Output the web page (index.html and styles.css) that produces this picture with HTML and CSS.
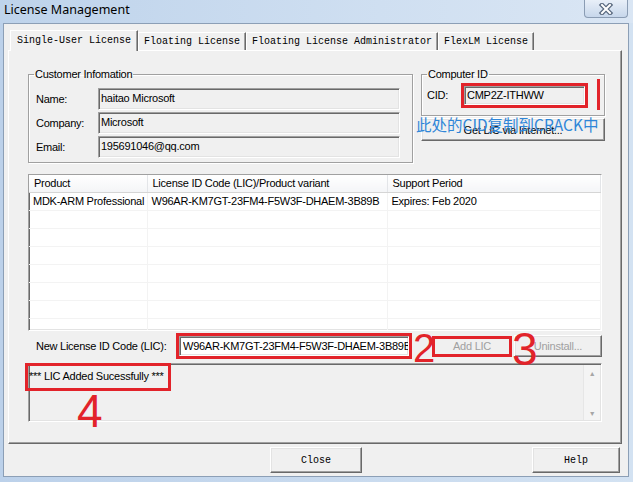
FILE: index.html
```html
<!DOCTYPE html>
<html lang="en">

<head>
  <meta charset="UTF-8">
  <title>License Management</title>
  <link rel="stylesheet" href="styles.css">
</head>

<body>

  <div class="window">
    <div class="titlebar">
      <span class="title">License Management</span>
      <button type="button" class="close-x" aria-label="Close">
        <svg width="16" height="12" viewBox="0 0 16 12">
          <path d="M4 2 L12 10 M12 2 L4 10" stroke="#56667c" stroke-width="4.5" stroke-linecap="square" fill="none" />
          <path d="M4 2 L12 10 M12 2 L4 10" stroke="#ffffff" stroke-width="2" stroke-linecap="square" fill="none" />
        </svg>
      </button>
    </div>

    <div class="client">
      <div class="tabs">
        <div class="tab active">Single-User License</div>
        <div class="tab">Floating License</div>
        <div class="tab">Floating License Administrator</div>
        <div class="tab">FlexLM License</div>
      </div>

      <div class="panel">
        <div class="top-row">
          <fieldset class="group customer">
            <legend>Customer Infomation</legend>
            <div class="field-row">
              <label>Name:</label>
              <div class="field sunken">haitao Microsoft</div>
            </div>
            <div class="field-row">
              <label>Company:</label>
              <div class="field sunken">Microsoft</div>
            </div>
            <div class="field-row">
              <label>Email:</label>
              <div class="field sunken">195691046@qq.com</div>
            </div>
          </fieldset>

          <div class="computer">
            <fieldset class="group cid-group">
              <legend>Computer ID</legend>
              <div class="field-row">
                <label class="cid-label">CID:</label>
                <div class="field cid sunken marked">CMP2Z-ITHWW</div>
              </div>
            </fieldset>
            <button type="button" class="btn get-lic">Get LIC via Internet...</button>
          </div>
        </div>

        <div class="list sunken">
          <table>
            <colgroup>
              <col class="c1">
              <col class="c2">
              <col class="c3">
            </colgroup>
            <thead>
              <tr>
                <th>Product</th>
                <th>License ID Code (LIC)/Product variant</th>
                <th>Support Period</th>
              </tr>
            </thead>
            <tbody>
              <tr>
                <td>MDK-ARM Professional</td>
                <td>W96AR-KM7GT-23FM4-F5W3F-DHAEM-3B89B</td>
                <td>Expires: Feb 2020</td>
              </tr>
              <tr><td></td><td></td><td></td></tr>
              <tr><td></td><td></td><td></td></tr>
              <tr><td></td><td></td><td></td></tr>
              <tr><td></td><td></td><td></td></tr>
              <tr><td></td><td></td><td></td></tr>
              <tr><td></td><td></td><td></td></tr>
              <tr><td></td><td></td><td></td></tr>
            </tbody>
          </table>
        </div>

        <div class="lic-row">
          <label class="lic-label">New License ID Code (LIC):</label>
          <input type="text" class="lic-input sunken marked" value="W96AR-KM7GT-23FM4-F5W3F-DHAEM-3B89B" readonly>
          <button type="button" class="btn add-lic" disabled>Add LIC</button>
          <button type="button" class="btn uninstall" disabled>Uninstall...</button>
        </div>

        <div class="output sunken">
          <div class="msg-area">
            <span class="msg">*** LIC Added Sucessfully ***</span>
          </div>
          <div class="scrollbar">
            <span>&#9650;</span>
            <span>&#9660;</span>
          </div>
        </div>

        <span class="note">此处的CID复制到CRACK中</span>
        <span class="bar"></span>
        <span class="digit d2">2</span>
        <span class="digit d3">3</span>
        <span class="digit d4">4</span>
      </div>

      <div class="footer">
        <button type="button" class="btn mono close-btn">Close</button>
        <button type="button" class="btn mono help-btn">Help</button>
      </div>
    </div>
  </div>

</body>

</html>
```

FILE: styles.css
```css
* {
  box-sizing: border-box;
}

body {
  margin: 0;
  width: 633px;
  height: 482px;
  overflow: hidden;
  font-family: 'Liberation Sans', Arial, sans-serif;
  font-size: 11px;
  letter-spacing: -0.25px;
  color: #000;
  background: linear-gradient(to right, #bcd1ea, #d3e2f2);
}

.window {
  height: 482px;
  display: flex;
  flex-direction: column;
}

/* title bar */
.titlebar {
  height: 23px;
  display: flex;
  justify-content: space-between;
  align-items: flex-start;
  background: linear-gradient(to right, #bed3eb, #cfdff1 60%, #dae6f4);
}

.title {
  margin-left: 4px;
  font-family: 'Noto Sans', sans-serif;
  font-size: 12.5px;
  letter-spacing: 0;
  line-height: 19px;
}

.close-x {
  width: 44px;
  height: 18px;
  margin-right: 5px;
  padding: 0;
  border: 1px solid #8a9cb3;
  border-top: none;
  border-radius: 0 0 4px 4px;
  background: linear-gradient(#e8eff8, #c7d7eb);
  display: flex;
  align-items: center;
  justify-content: center;
}

/* dialog body */
.client {
  flex: 1;
  margin: 0 4px 5px 3px;
  padding: 6px 6px 0 4px;
  background: #f0f0f0;
  border: 1px solid #8c9fb6;
  display: flex;
  flex-direction: column;
}

.tabs {
  display: flex;
  align-items: flex-end;
  height: 20px;
  margin-left: 2px;
  font-family: 'Liberation Mono', 'Courier New', monospace;
  font-size: 10px;
  letter-spacing: 0;
}

.tab {
  height: 18px;
  line-height: 17px;
  padding: 0 5px;
  white-space: nowrap;
  border-top: 1px solid #fff;
  border-left: 1px solid #fff;
  border-right: 1px solid #696969;
  box-shadow: inset -1px 0 0 #a0a0a0;
}

.tab.active {
  position: relative;
  z-index: 1;
  height: 21px;
  line-height: 20px;
  margin-bottom: -1px;
  padding: 0 6px;
  background: #f0f0f0;
}

.panel {
  position: relative;
  height: 394px;
  padding: 17px 0 0 19px;
  border: 1px solid;
  border-color: #fff #696969 #696969 #fff;
  box-shadow: inset -1px -1px 0 #a0a0a0;
}

.sunken {
  border: 1px solid;
  border-color: #a0a0a0 #fff #fff #a0a0a0;
  box-shadow: inset 1px 1px 0 #696969, inset -1px -1px 0 #e3e3e3;
}

.btn {
  padding: 0;
  font-family: inherit;
  font-size: 11px;
  letter-spacing: inherit;
  color: #000;
  background: #f0f0f0;
  border: 1px solid;
  border-color: #fff #696969 #696969 #fff;
  box-shadow: inset -1px -1px 0 #a0a0a0, inset 1px 1px 0 #e3e3e3;
}

.btn:disabled {
  color: #a0a0a0;
}

.marked {
  outline: 3px solid #e2232a;
}

/* group boxes */
.top-row {
  display: flex;
  gap: 8px;
}

.group {
  margin: 0;
  border: 1px solid #a0a0a0;
  box-shadow: 1px 1px 0 #fff, inset 1px 1px 0 #fff;
}

.group legend {
  margin-left: -2px;
  padding: 0 1px;
  line-height: 13px;
}

.customer {
  width: 385px;
  height: 95px;
  padding: 7px 11px 0 7px;
}

.field-row {
  display: flex;
  align-items: center;
  height: 22px;
  margin-bottom: 2px;
}

.field-row label {
  width: 62px;
}

.field {
  width: 302px;
  height: 22px;
  padding-left: 2px;
  line-height: 18px;
  background: #f0f0f0;
  white-space: nowrap;
}

.computer {
  width: 184px;
  display: flex;
  flex-direction: column;
}

.cid-group {
  height: 48px;
  padding: 3px 0 0 5px;
}

.cid-group legend {
  margin-left: 0;
}

.field-row .cid-label {
  width: 37px;
}

.field.cid {
  width: 121px;
  height: 19px;
  line-height: 16px;
}

.get-lic {
  height: 23px;
  margin-top: 2px;
}

/* list view */
.list {
  width: 574px;
  height: 157px;
  margin-top: 11px;
  background: #fff;
  overflow: hidden;
}

.list table {
  width: 100%;
  table-layout: fixed;
  border-collapse: collapse;
}

.list .c1 {
  width: 118px;
}

.list .c2 {
  width: 240px;
}

.list th {
  height: 17px;
  padding: 0 5px;
  font-weight: normal;
  text-align: left;
  white-space: nowrap;
  background: linear-gradient(#fff, #f4f5f7);
  border-right: 1px solid #e3e5e8;
  border-bottom: 1px solid #d5d5d5;
}

.list td {
  height: 18px;
  padding: 0 4px;
  white-space: nowrap;
  overflow: hidden;
  border-right: 1px solid #f3f3f3;
  border-bottom: 1px solid #f3f3f3;
}

/* new LIC row */
.lic-row {
  display: flex;
  align-items: center;
  height: 24px;
  margin-top: 3px;
}

.lic-label {
  width: 151px;
  padding-left: 8px;
}

.lic-input {
  width: 230px;
  height: 20px;
  padding: 0 0 0 3px;
  font-family: inherit;
  font-size: 11px;
  letter-spacing: inherit;
  background: #fff;
}

.add-lic {
  width: 80px;
  height: 21px;
  margin-left: 23px;
  border: 3px solid #e2232a;
  box-shadow: none;
}

.uninstall {
  width: 88px;
  height: 22px;
  margin-left: 2px;
}

/* output box */
.output {
  display: flex;
  width: 574px;
  height: 59px;
  margin-top: 5px;
  background: #f0f0f0;
}

.msg-area {
  flex: 1;
}

.msg {
  display: inline-block;
  margin: -1px 0 0 -4px;
  padding: 4px 4px 5px 1px;
  line-height: 13px;
  border: 3px solid #e2232a;
}

.scrollbar {
  width: 17px;
  margin: 1px 1px 1px 0;
  padding: 5px 0 3px;
  display: flex;
  flex-direction: column;
  justify-content: space-between;
  align-items: center;
  font-size: 7px;
  color: #a6a6a6;
  background: #f4f4f4;
  border-left: 1px solid #e6e6e6;
}

/* annotations drawn on the screenshot */
.note {
  position: absolute;
  left: 407px;
  top: 65px;
  z-index: 2;
  font-family: 'Noto Sans CJK SC', sans-serif;
  font-size: 15.5px;
  letter-spacing: 0;
  line-height: 16px;
  color: #2f86d8;
  white-space: nowrap;
}

.bar {
  position: absolute;
  left: 588px;
  top: 28px;
  width: 3px;
  height: 31px;
  background: #e2232a;
}

.digit {
  position: absolute;
  z-index: 2;
  font-family: 'Liberation Sans', Arial, sans-serif;
  letter-spacing: 0;
  line-height: 1;
  color: #e2232a;
}

.d2 {
  left: 404px;
  top: 277px;
  font-size: 40px;
}

.d3 {
  left: 503px;
  top: 275px;
  font-size: 46px;
}

.d4 {
  left: 68px;
  top: 337px;
  font-size: 46px;
}

/* bottom buttons */
.footer {
  display: flex;
  margin-top: 3px;
  padding-left: 262px;
}

.mono {
  font-family: 'Liberation Mono', 'Courier New', monospace;
  font-size: 10px;
  letter-spacing: 0;
}

.close-btn {
  width: 92px;
  height: 26px;
}

.help-btn {
  width: 88px;
  height: 26px;
  margin-left: 170px;
}
```
